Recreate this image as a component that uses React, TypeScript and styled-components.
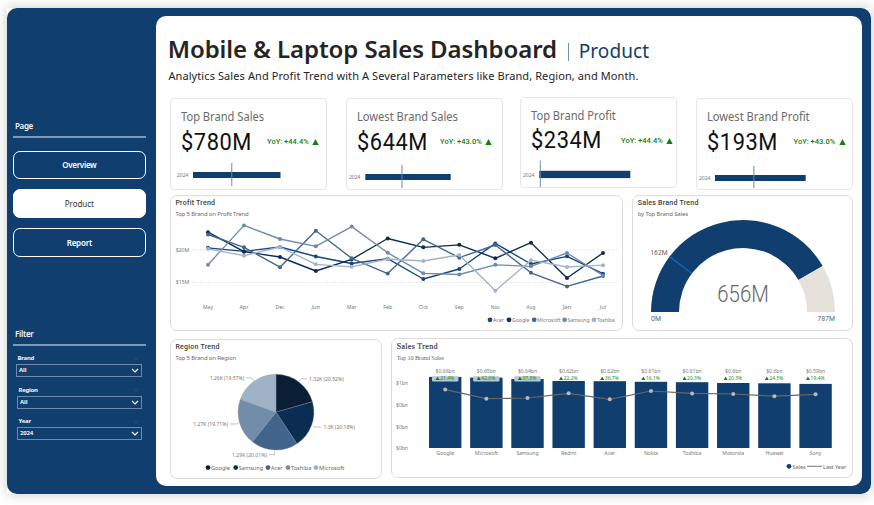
import React from 'react';
import styled, { createGlobalStyle } from 'styled-components';

const navy = '#103e6e';
const sans = '"Noto Sans", "Open Sans", sans-serif';
const din = 'Roboto, "Noto Sans", sans-serif';

const GlobalStyle = createGlobalStyle`
  * { box-sizing: border-box; }
  html, body { margin: 0; padding: 0; background: #fff; overflow: hidden; }
  body { font-family: ${sans}; color: #252423; }
`;

const Page = styled.div`
  width: 874px;
  height: 505px;
  padding: 8px 3px 11px 7px;
  overflow: hidden;
`;
const Shell = styled.div`
  width: 864px;
  height: 486px;
  background: #fff;
  box-shadow: 0 0 12px rgba(0, 0, 0, 0.22);
`;
const Frame = styled.div`
  display: flex;
  width: 100%;
  height: 485.7px;
  padding: 8px 9px 8px 0;
  border-radius: 10px;
  background: ${navy};
`;
const Sidebar = styled.aside`
  display: flex;
  flex-direction: column;
  width: 148.7px;
  flex: none;
  padding: 101px 10px 0 6px;
`;
const SideHeading = styled.h2<{ $ls: number }>`
  margin: 0;
  padding: 0 0 0 2px;
  height: 18.7px;
  flex: none;
  font: 600 8px/18px ${sans};
  letter-spacing: ${(p) => p.$ls}px;
  color: #f2f5f9;
`;
const Divider = styled.div`
  height: 2px;
  flex: none;
  background: #8197b7;
`;
const Nav = styled.nav`
  display: flex;
  flex-direction: column;
  flex: none;
  gap: 10px;
  padding-top: 13px;
  height: 187.3px;
`;
const NavButton = styled.button<{ $active?: boolean; $ls: number }>`
  height: 28.8px;
  flex: none;
  padding: 0;
  border: 1.4px solid #fff;
  border-radius: 7px;
  background: ${(p) => (p.$active ? '#fff' : 'transparent')};
  color: ${(p) => (p.$active ? '#333' : '#fff')};
  font: ${(p) => (p.$active ? 400 : 600)} 8px/26px ${sans};
  letter-spacing: ${(p) => p.$ls}px;
`;
const Filters = styled.div`
  display: flex;
  flex-direction: column;
  gap: 6.3px;
  padding: 6.5px 3.5px 0 4px;
`;
const Field = styled.label<{ $shift: number }>`
  display: block;
  height: 25.2px;
  margin-left: ${(p) => p.$shift - 1}px;
`;
const FieldHead = styled.div`
  display: flex;
  justify-content: space-between;
  align-items: center;
  height: 12px;
  padding: 0 3px 0 1.5px;
  font: 700 6px/12px ${sans};
  letter-spacing: -0.25px;
  color: #f2f5f9;
`;
const SelectBox = styled.div`
  display: flex;
  justify-content: space-between;
  align-items: center;
  height: 13.3px;
  padding: 0 2px;
  border: 1px solid #7189aa;
  font: 700 6px/11px ${sans};
  letter-spacing: -0.15px;
  color: #f2f5f9;
`;
const Content = styled.main`
  flex: 1;
  height: 469.7px;
  padding: 17px 9px 0 14px;
  border-radius: 10px;
  background: #fff;
`;
const TitleRow = styled.div`
  display: flex;
  align-items: baseline;
  height: 35px;
  margin-left: -2px;
  white-space: nowrap;
`;
const Title = styled.h1`
  margin: 0;
  width: 389px;
  font: 600 24px/32px ${sans};
  letter-spacing: -0.08px;
  color: #252423;
`;
const TitleBar = styled.span`
  width: 1px;
  height: 18px;
  margin: 0 10px 0 11px;
  align-self: flex-start;
  transform: translateY(10px);
  background: #6e8fb4;
`;
const Section = styled.span`
  font: 400 19px/32px ${sans};
  letter-spacing: 0.1px;
  color: ${navy};
`;
const Tagline = styled.p`
  margin: 0 0 0 -1.3px;
  height: 30px;
  font: 400 11px/16px ${sans};
  letter-spacing: 0.09px;
  white-space: nowrap;
  color: #252423;
`;
const KpiRow = styled.section`
  display: grid;
  grid-template-columns: 176px 174px 176px 157px;
  height: 97px;
`;
const KpiCard = styled.article<{ $raised?: boolean }>`
  display: flex;
  flex-direction: column;
  width: 157px;
  height: 91.5px;
  margin-top: ${(p) => (p.$raised ? -1.5 : 0)}px;
  border: 1px solid #e6e6e6;
  border-radius: 4px;
`;
const KpiName = styled.h3`
  margin: 9px 0 0 10.2px;
  height: 18px;
  font: 400 12.5px/18px ${sans};
  white-space: nowrap;
  color: #6a6a6a;
  transform: scaleX(0.89);
  transform-origin: left;
`;
const KpiLine = styled.div`
  display: flex;
  align-items: center;
  justify-content: space-between;
  height: 28px;
  margin-top: 2px;
  padding-left: 10.2px;
`;
const KpiValue = styled.strong`
  width: 72px;
  font: 400 23.5px/27px ${din};
  letter-spacing: 0.6px;
  color: #111;
  transform: scaleX(0.93);
  transform-origin: left;
`;
const KpiYoy = styled.span<{ $inset: number }>`
  display: flex;
  align-items: center;
  gap: 3.5px;
  margin-right: ${(p) => p.$inset}px;
  font: 500 7.5px/12px ${din};
  white-space: nowrap;
  color: #0a850a;
`;
const Bullet = styled.svg`
  display: block;
  width: 155px;
  height: 32px;
  flex: none;
`;
const ChartRow = styled.section<{ $cols: string }>`
  display: grid;
  grid-template-columns: ${(p) => p.$cols};
  justify-content: space-between;
`;
const ChartCard = styled.article<{ $h: number; $lift?: number }>`
  height: ${(p) => p.$h}px;
  margin-top: ${(p) => p.$lift || 0}px;
  border: 1px solid #dcdcdc;
  border-radius: 7px;
  overflow: hidden;
`;
const SalesCard = styled(ChartCard)`
  margin-left: 1px;
`;
const ChartTitle = styled.h3<{ $serif?: boolean }>`
  margin: 0;
  padding-left: 4.7px;
  height: 13px;
  font: ${(p) => (p.$serif ? '400 8px/16px "Liberation Serif", serif' : `500 7px/14px ${din}`)};
  letter-spacing: ${(p) => (p.$serif ? 0.32 : 0.24)}px;
  color: #3c3c3c;
  ${(p) => (p.$serif ? '-webkit-text-stroke: 0.2px #3c3c3c;' : '')}
`;
const ChartSub = styled.p<{ $serif?: boolean }>`
  margin: 0;
  padding-left: 4.7px;
  height: 11px;
  font: ${(p) => (p.$serif ? '400 6.4px/11px "Liberation Serif", serif' : `400 6px/10px ${sans}`)};
  letter-spacing: -0.16px;
  color: #6a6a6a;
`;
const Plot = styled.svg`
  display: block;
`;

type TProps = {
  x: number; y: number; w: number; s?: number; fill?: string;
  weight?: number; font?: string; children: string;
};
const T = ({ x, y, w, s = 5.4, fill = '#777', weight = 400, font = sans, children }: TProps) => (
  <text x={x} y={y} textLength={w} lengthAdjust="spacingAndGlyphs" fontSize={s} fill={fill} fontWeight={weight} fontFamily={font}>
    {children}
  </text>
);

const Chevron = ({ faint }: { faint?: boolean }) => (
  <svg width={faint ? 6 : 8} height="5" viewBox="0 0 8 5" fill="none" stroke={faint ? '#41628a' : '#fff'} strokeWidth={faint ? 0.9 : 1.2}>
    <path d="M1 1 L4 4 L7 1" />
  </svg>
);

const fields = [
  { name: 'Brand', value: 'All', shift: 0 },
  { name: 'Region', value: 'All', shift: 1 },
  { name: 'Year', value: '2024', shift: 1 },
];

const kpis = [
  { name: 'Top Brand Sales', value: '$780M', yoy: 'YoY: +44.4%', x: 170, top: 156, inset: 6.5, label: 177, base: 177, bar: [193, 280.5, 172, 6], mark: [231.7, 163, 186] },
  { name: 'Lowest Brand Sales', value: '$644M', yoy: 'YoY: +43.0%', x: 346, top: 156, inset: 9.5, label: 349, base: 179, bar: [365.3, 450.7, 174, 6], mark: [402, 165, 189] },
  { name: 'Top Brand Profit', value: '$234M', yoy: 'YoY: +44.4%', x: 520, top: 154.5, inset: 2.5, label: 523, base: 176, bar: [539.3, 630.3, 170.3, 7.3], mark: [540.4, 160, 187], raised: true },
  { name: 'Lowest Brand Profit', value: '$193M', yoy: 'YoY: +43.0%', x: 696, top: 156, inset: 6, label: 699, base: 180, bar: [715, 805.7, 175, 6], mark: [753.8, 166, 189] },
];

const lineX = [208, 244, 280, 315.8, 351.7, 387.7, 423.3, 459.3, 495.3, 531, 567, 603];
const months = ['May', 'Apr', 'Dec', 'Jun', 'Mar', 'Feb', 'Oct', 'Sep', 'Nov', 'Aug', 'Jan', 'Jul'];
const series = [
  { name: 'Acer', color: '#164480', dot: 490, w: 11, ys: [247.8, 251.3, 247, 256.5, 263.5, 258.7, 279, 269, 243.4, 264, 256.3, 273.7] },
  { name: 'Google', color: '#0b2c52', dot: 509, w: 17.5, ys: [232.2, 251.7, 257, 271, 259.3, 238.5, 247.3, 244.8, 258.3, 242.7, 278, 253] },
  { name: 'Microsoft', color: '#42658f', dot: 534.2, w: 23.5, ys: [234.5, 247.3, 267.2, 230.8, 258.3, 273.6, 239.3, 257.7, 245, 272.8, 286.4, 276] },
  { name: 'Samsung', color: '#6d8bac', dot: 564.6, w: 22, ys: [264.7, 225.4, 239, 246.3, 226.6, 252.8, 273.3, 274.5, 264.8, 266.3, 253, 275.5] },
  { name: 'Toshiba', color: '#a2b4ca', dot: 594, w: 18, ys: [248.8, 255.7, 247, 264.3, 266.8, 259, 261, 255, 290.7, 260.2, 267, 265.2] },
];

const pie = [
  { name: 'Google', v: 0.2052, color: '#0a1e36', dot: 208, w: 19 },
  { name: 'Samsung', v: 0.2018, color: '#0c2d52', dot: 235.7, w: 24.5 },
  { name: 'Acer', v: 0.2001, color: '#40648c', dot: 268, w: 11.5 },
  { name: 'Toshiba', v: 0.1971, color: '#718daa', dot: 288, w: 20.3 },
  { name: 'Microsoft', v: 0.1957, color: '#a0b2c7', dot: 316, w: 25.3 },
];
const pieLabels: [string, number, number, number, string][] = [
  ['1.32K (20.52%)', 309, 380.8, 34.7, '299.3,381 301.5,378.6 306.7,378.6'],
  ['1.3K (20.18%)', 323.5, 429, 31.5, '312.5,425.3 314.5,427 321,427'],
  ['1.29K (20.01%)', 232, 457, 35, '274.7,451 274.7,454.7 269,454.7'],
  ['1.27K (19.71%)', 193.3, 426.3, 34.7, '238.5,422.5 236.5,424 230,424'],
  ['1.26K (19.57%)', 209.7, 380.3, 34.5, '253.8,381 251.5,377.8 246.5,377.8'],
];

const bars = [
  { name: 'Google', amt: '$0.66bn', pct: '21.4%', top: 376.9, ly: 389.6, w: 18 },
  { name: 'Microsoft', amt: '$0.65bn', pct: '42.6%', top: 377.6, ly: 398.7, w: 23 },
  { name: 'Samsung', amt: '$0.64bn', pct: '37.8%', top: 379, ly: 398, w: 22 },
  { name: 'Redmi', amt: '$0.62bn', pct: '22.2%', top: 381, ly: 393.3, w: 15.5 },
  { name: 'Acer', amt: '$0.62bn', pct: '36.7%', top: 381.2, ly: 399.3, w: 11 },
  { name: 'Nokia', amt: '$0.61bn', pct: '16.1%', top: 381.8, ly: 391, w: 14 },
  { name: 'Toshiba', amt: '$0.61bn', pct: '20.3%', top: 382.2, ly: 393.4, w: 18.5 },
  { name: 'Motorola', amt: '$0.6bn', pct: '20.3%', top: 383, ly: 394, w: 22 },
  { name: 'Huawei', amt: '$0.6bn', pct: '24.5%', top: 383.3, ly: 396.2, w: 18 },
  { name: 'Sony', amt: '$0.59bn', pct: '19.4%', top: 383.9, ly: 394.3, w: 11.5 },
];
const barMid = (i: number) => 445.2 + i * 41.15;

const point = (cx: number, cy: number, r: number, deg: number) => {
  const a = (deg * Math.PI) / 180;
  return `${(cx + r * Math.cos(a)).toFixed(2)} ${(cy + r * Math.sin(a)).toFixed(2)}`;
};
const ring = (from: number, to: number) =>
  `M${point(743, 312, 92, from)} A92 92 0 0 1 ${point(743, 312, 92, to)} L${point(743, 312, 64, to)} A64 64 0 0 0 ${point(743, 312, 64, from)} Z`;

const ProfitTrend = () => (
  <Plot width="451" height="109" viewBox="171 220 451 109">
    {[250, 282.4].map((y) => (
      <line key={y} x1="192" x2="618" y1={y} y2={y} stroke="#c8c8c8" strokeWidth="0.8" strokeDasharray="0.9 1.8" />
    ))}
    <T x={175.7} y={251.9} w={13.6}>$20M</T>
    <T x={175.7} y={284.2} w={13.6}>$15M</T>
    {series.map((s) => (
      <g key={s.name} fill={s.color}>
        <polyline points={s.ys.map((y, i) => `${lineX[i]},${y}`).join(' ')} fill="none" stroke={s.color} strokeWidth="1.35" strokeLinejoin="round" />
        {s.ys.map((y, i) => <circle key={i} cx={lineX[i]} cy={y} r="2" />)}
        <circle cx={s.dot} cy="319.8" r="2.4" />
        <T x={s.dot + 2.9} y={321.9} w={s.w}>{s.name}</T>
      </g>
    ))}
    {months.map((m, i) => {
      const w = m === 'Jul' ? 6.5 : m === 'Jun' || m === 'Jan' ? 8.5 : m === 'May' || m === 'Mar' ? 10 : 9;
      return <T key={m} x={lineX[i] - w / 2} y={309} w={w}>{m}</T>;
    })}
  </Plot>
);

const SalesGauge = () => (
  <Plot width="219" height="109" viewBox="633 220 219 109">
    <path d={ring(180, 330)} fill={navy} />
    <path d={ring(330, 360)} fill="#e6e1db" />
    <path d={`M${point(743, 312, 92, 217)} L${point(743, 312, 64, 217)}`} stroke="#1862c4" strokeWidth="1.4" />
    <T x={650.3} y={255} w={17.3} s={6.5} font={din} fill="#666">162M</T>
    <T x={651} y={320.7} w={10} s={6.5} font={din} fill="#666">0M</T>
    <T x={817.3} y={320.7} w={17.7} s={6.5} font={din} fill="#666">787M</T>
    <T x={717.3} y={301.8} w={51.5} s={23.5} weight={300} font={din} fill="#666">656M</T>
  </Plot>
);

const RegionPie = () => {
  let acc = -90;
  return (
    <Plot width="210" height="113" viewBox="171 364 210 113">
      {pie.map((p) => {
        const from = acc;
        acc += p.v * 360;
        return (
          <g key={p.name} fill={p.color}>
            <path d={`M276 412.2 L${point(276, 412.2, 37.9, from)} A37.9 37.9 0 0 1 ${point(276, 412.2, 37.9, acc)} Z`} stroke="#7e8ea2" strokeWidth="0.35" />
            <circle cx={p.dot} cy="467.6" r="2.4" />
            <T x={p.dot + 3} y={470} w={p.w} s={6} fill="#666">{p.name}</T>
          </g>
        );
      })}
      {pieLabels.map(([t, x, y, w, pts]) => (
        <g key={t}>
          <polyline points={pts} fill="none" stroke="#aaa" strokeWidth="0.7" />
          <T x={x} y={y} w={w} s={5.2}>{t}</T>
        </g>
      ))}
    </Plot>
  );
};

const SalesBars = () => (
  <Plot width="460" height="114" viewBox="392 363 460 114">
    {['$1bn', '$0bn', '$0bn', '$0bn'].map((t, i) => (
      <T key={i} x={396} y={385.3 + i * 21.7} w={12} s={5.4}>{t}</T>
    ))}
    {bars.map((b, i) => (
      <g key={b.name}>
        <rect x={barMid(i) - 16.2} y={b.top} width="32.4" height={448 - b.top} fill={navy} />
        {i < 3 && <rect x={barMid(i) - 13.2} y="376.3" width="26.4" height="5.2" rx="1" fill="#b9c6d5" />}
        <T x={barMid(i) - b.amt.length * 1.37} y={373.2} w={b.amt.length * 2.74}>{b.amt}</T>
        <path d={`M${barMid(i) - 9.6} 380 l2 -3.6 l2 3.6 z`} fill="#0a850a" />
        <T x={barMid(i) - 5} y={380.2} w={14} s={5.2} fill="#1d8f1d">{b.pct}</T>
        <T x={barMid(i) - b.w / 2} y={455.3} w={b.w}>{b.name}</T>
      </g>
    ))}
    <polyline points={bars.map((b, i) => `${barMid(i)},${b.ly}`).join(' ')} fill="none" stroke="#666" strokeWidth="1.2" />
    {bars.map((b, i) => <circle key={b.name} cx={barMid(i)} cy={b.ly} r="2" fill="#bababa" />)}
    <circle cx="789" cy="466.3" r="2.4" fill={navy} />
    <T x={792.4} y={468.9} w={13.2} fill="#666">Sales</T>
    <line x1="807" x2="822" y1="466.3" y2="466.3" stroke="#777" strokeWidth="1" />
    <T x={823} y={468.9} w={23.3} fill="#666">Last Year</T>
  </Plot>
);

export default function App() {
  return (
    <>
      <GlobalStyle />
      <Page>
        <Shell>
          <Frame>
            <Sidebar>
              <SideHeading $ls={-0.35}>Page</SideHeading>
              <Divider />
              <Nav>
                <NavButton $ls={-0.3}>Overview</NavButton>
                <NavButton $active $ls={-0.05}>Product</NavButton>
                <NavButton $ls={-0.2}>Report</NavButton>
              </Nav>
              <SideHeading $ls={-0.28}>Filter</SideHeading>
              <Divider />
              <Filters>
                {fields.map((f) => (
                  <Field key={f.name} $shift={f.shift}>
                    <FieldHead>{f.name}<Chevron faint /></FieldHead>
                    <SelectBox>{f.value}<Chevron /></SelectBox>
                  </Field>
                ))}
              </Filters>
            </Sidebar>
            <Content>
              <TitleRow>
                <Title>Mobile &amp; Laptop Sales Dashboard</Title>
                <TitleBar />
                <Section>Product</Section>
              </TitleRow>
              <Tagline>Analytics Sales And Profit Trend with A Several Parameters like Brand, Region, and Month.</Tagline>
              <KpiRow>
                {kpis.map((k) => (
                  <KpiCard key={k.name} $raised={k.raised}>
                    <KpiName>{k.name}</KpiName>
                    <KpiLine>
                      <KpiValue>{k.value}</KpiValue>
                      <KpiYoy $inset={k.inset}>
                        {k.yoy}
                        <svg width="7" height="6" viewBox="0 0 7 6"><path d="M3.5 0 L6.7 6 H0.3 Z" fill="#0a850a" /></svg>
                      </KpiYoy>
                    </KpiLine>
                    <Bullet viewBox={`${k.x + 1} ${k.top} 155 32`}>
                      <T x={k.label} y={k.base} w={11.5} s={4.8}>2024</T>
                      <rect x={k.bar[0]} y={k.bar[2]} width={k.bar[1] - k.bar[0]} height={k.bar[3]} fill={navy} />
                      <line x1={k.mark[0]} x2={k.mark[0]} y1={k.mark[1]} y2={k.mark[2]} stroke="#6685ad" strokeOpacity="0.75" strokeWidth="1.3" />
                    </Bullet>
                  </KpiCard>
                ))}
              </KpiRow>
              <ChartRow $cols="453px 221px">
                <ChartCard $h={136}>
                  <ChartTitle>Profit Trend</ChartTitle>
                  <ChartSub>Top 5 Brand on Profit Trend</ChartSub>
                  <ProfitTrend />
                </ChartCard>
                <ChartCard $h={136}>
                  <ChartTitle>Sales Brand Trend</ChartTitle>
                  <ChartSub>by Top Brand Sales</ChartSub>
                  <SalesGauge />
                </ChartCard>
              </ChartRow>
              <ChartRow $cols="212px 463px">
                <ChartCard $h={140} $lift={8}>
                  <ChartTitle>Region Trend</ChartTitle>
                  <ChartSub>Top 5 Brand on Region</ChartSub>
                  <RegionPie />
                </ChartCard>
                <SalesCard $h={140} $lift={7}>
                  <ChartTitle $serif>Sales Trend</ChartTitle>
                  <ChartSub $serif>Top 10 Brand Sales</ChartSub>
                  <SalesBars />
                </SalesCard>
              </ChartRow>
            </Content>
          </Frame>
        </Shell>
      </Page>
    </>
  );
}
